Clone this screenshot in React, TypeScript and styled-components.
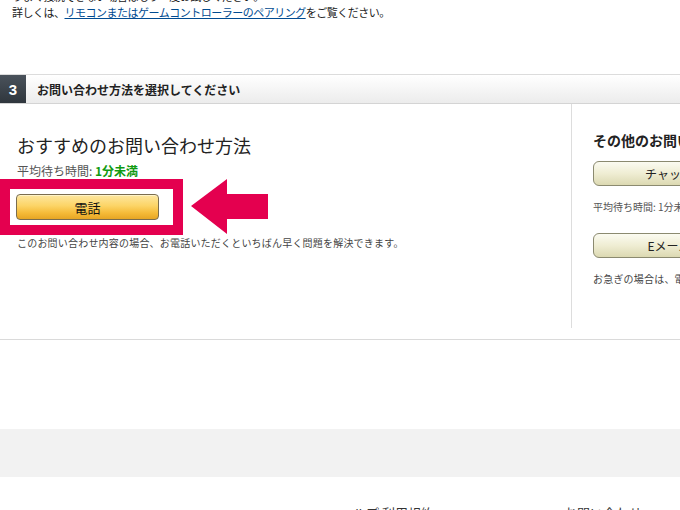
import React from 'react'
import styled, { createGlobalStyle } from 'styled-components'

const GlobalStyle = createGlobalStyle`
  body {
    margin: 0;
    background: #fff;
    font-family: "Noto Sans CJK JP", "Liberation Sans", sans-serif;
    color: #333;
    overflow: hidden;
  }
`

const Page = styled.div`
  width: 680px;
`

const Intro = styled.div`
  margin-top: -12px;
  padding: 0 12px;
  font-size: 11px;
  line-height: 16px;
  letter-spacing: -0.5px;
  color: #222;
  height: 86px;
`

const Link = styled.a`
  color: #004b91;
  text-decoration: underline;
`

const SectionBar = styled.div`
  display: flex;
  align-items: stretch;
  height: 28px;
  border-top: 1px solid #dcdcdc;
  border-bottom: 1px solid #d4d4d4;
  background: linear-gradient(#ffffff, #ececec);
`

const StepNumber = styled.div`
  width: 26px;
  display: flex;
  align-items: center;
  justify-content: center;
  background: linear-gradient(#4a525b, #2f363d);
  color: #fff;
  font-family: "Liberation Sans", sans-serif;
  font-weight: bold;
  font-size: 15px;
`

const SectionTitle = styled.div`
  display: flex;
  align-items: center;
  padding-left: 11px;
  font-size: 12px;
  font-weight: bold;
  color: #222;
`

const Content = styled.div`
  display: flex;
  padding-bottom: 11px;
  border-bottom: 1px solid #dadada;
`

const MainColumn = styled.div`
  width: 554px;
  height: 224px;
  padding-left: 17px;
  border-right: 1px solid #dddddd;
`

const OtherColumn = styled.div`
  flex: 1;
  padding-left: 21px;
  white-space: nowrap;
  overflow: hidden;
`

const Heading = styled.h2`
  margin: 0;
  padding-top: 29px;
  font-size: 18px;
  line-height: 24px;
  font-weight: normal;
  color: #222;
`

const WaitLine = styled.div<{ $small?: boolean }>`
  font-size: ${p => (p.$small ? '10px' : '12px')};
  line-height: ${p => (p.$small ? '14px' : '16px')};
  color: #555;
  margin-top: ${p => (p.$small ? '14px' : '6px')};
`

const Fast = styled.span`
  color: #119a11;
  font-weight: bold;
`

const HighlightRow = styled.div`
  display: flex;
  align-items: center;
  gap: 8px;
  margin-left: -17px;
`

const Highlight = styled.div`
  border: 10px solid #e4004f;
  padding: 5px 14px 5px 6px;
  background: #fff;
`

const CallButton = styled.button`
  display: block;
  width: 143px;
  height: 26px;
  border: 1px solid #7a6d4f;
  border-radius: 4px;
  background: linear-gradient(#fde7a0 0%, #fcd466 45%, #f5bb38 75%, #e6a624 100%);
  box-shadow: inset 0 1px 0 #fff3c8;
  font-family: inherit;
  font-size: 13px;
  color: #111;
  padding: 0;
`

const Note = styled.p<{ $gap?: number }>`
  margin: ${p => p.$gap ?? 1}px 0 0;
  font-size: 10px;
  line-height: 14px;
  letter-spacing: 0.2px;
  color: #444;
`

const OtherHeading = styled.h3`
  margin: 0;
  padding-top: 26px;
  font-size: 14px;
  line-height: 20px;
  font-weight: bold;
  color: #222;
`

const SubButton = styled.button<{ $top: number }>`
  display: block;
  margin-top: ${p => p.$top}px;
  width: 152px;
  height: 25px;
  border: 1px solid #8b8a70;
  border-radius: 6px;
  background: linear-gradient(#fbfbf1 0%, #efedd3 50%, #dcd9b2 100%);
  font-family: inherit;
  font-size: 12px;
  color: #222;
  padding: 0;
`

const Spacer = styled.div`
  height: 89px;
`

const GrayBand = styled.div`
  height: 48px;
  background: #f2f2f2;
`

const FooterRow = styled.div`
  display: flex;
  gap: 130px;
  padding: 26px 0 0 340px;
  font-size: 13px;
  color: #333;
  white-space: nowrap;
`

const Arrow = () => (
  <svg width="78" height="56" viewBox="0 0 78 56">
    <polygon points="0,27 36,0 36,15 77,15 77,40 36,40 36,55" fill="#e4004f" />
  </svg>
)

export default function App() {
  return (
    <Page>
      <GlobalStyle />
      <Intro>
        <div>うまく接続できない場合はもう一度お試しください。</div>
        <div>
          詳しくは、<Link href="#">リモコンまたはゲームコントローラーのペアリング</Link>をご覧ください。
        </div>
      </Intro>
      <SectionBar>
        <StepNumber>3</StepNumber>
        <SectionTitle>お問い合わせ方法を選択してください</SectionTitle>
      </SectionBar>
      <Content>
        <MainColumn>
          <Heading>おすすめのお問い合わせ方法</Heading>
          <WaitLine>
            平均待ち時間: <Fast>1分未満</Fast>
          </WaitLine>
          <HighlightRow>
            <Highlight>
              <CallButton>電話</CallButton>
            </Highlight>
            <Arrow />
          </HighlightRow>
          <Note>このお問い合わせ内容の場合、お電話いただくといちばん早く問題を解決できます。</Note>
        </MainColumn>
        <OtherColumn>
          <OtherHeading>その他のお問い合わせ方法</OtherHeading>
          <SubButton $top={11}>チャット</SubButton>
          <WaitLine $small>平均待ち時間: 1分未満</WaitLine>
          <SubButton $top={19}>Eメール</SubButton>
          <Note $gap={14}>お急ぎの場合は、電話またはチャットをご利用ください。</Note>
        </OtherColumn>
      </Content>
      <Spacer />
      <GrayBand />
      <FooterRow>
        <span>ヘルプ 利用規約</span>
        <span>お問い合わせ</span>
      </FooterRow>
    </Page>
  )
}
